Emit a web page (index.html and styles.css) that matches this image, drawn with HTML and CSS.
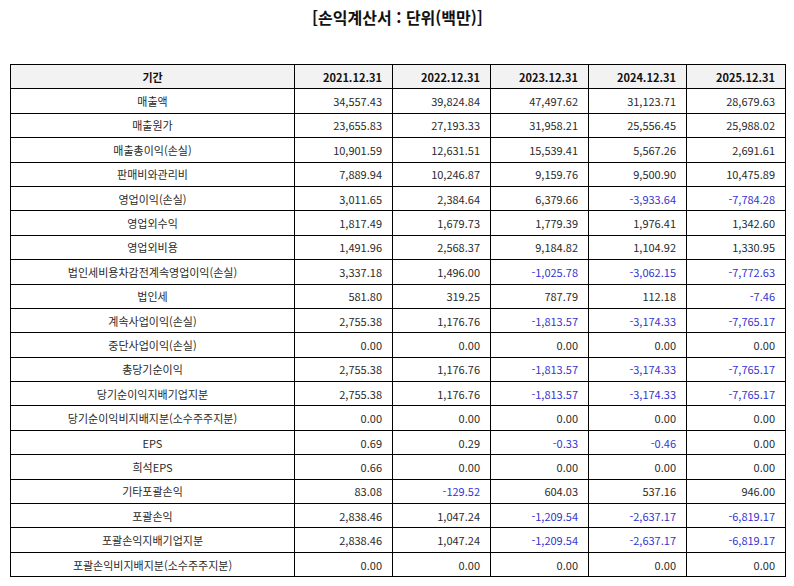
FILE: index.html
```html
<!DOCTYPE html>
<html lang="ko">
<head>
<meta charset="utf-8">
<title>손익계산서</title>
<link rel="stylesheet" href="styles.css">
</head>
<body>
<h1 class="title">[손익계산서 : 단위(백만)]</h1>
<table class="fin">
<colgroup>
<col class="c-label"><col class="c-val"><col class="c-val"><col class="c-val"><col class="c-val"><col class="c-last">
</colgroup>
<thead>
<tr><th>기간</th><th class="num">2021.12.31</th><th class="num">2022.12.31</th><th class="num">2023.12.31</th><th class="num">2024.12.31</th><th class="num">2025.12.31</th></tr>
</thead>
<tbody>
<tr><td>매출액</td><td>34,557.43</td><td>39,824.84</td><td>47,497.62</td><td>31,123.71</td><td>28,679.63</td></tr>
<tr><td>매출원가</td><td>23,655.83</td><td>27,193.33</td><td>31,958.21</td><td>25,556.45</td><td>25,988.02</td></tr>
<tr><td>매출총이익(손실)</td><td>10,901.59</td><td>12,631.51</td><td>15,539.41</td><td>5,567.26</td><td>2,691.61</td></tr>
<tr><td>판매비와관리비</td><td>7,889.94</td><td>10,246.87</td><td>9,159.76</td><td>9,500.90</td><td>10,475.89</td></tr>
<tr><td>영업이익(손실)</td><td>3,011.65</td><td>2,384.64</td><td>6,379.66</td><td class="neg">-3,933.64</td><td class="neg">-7,784.28</td></tr>
<tr><td>영업외수익</td><td>1,817.49</td><td>1,679.73</td><td>1,779.39</td><td>1,976.41</td><td>1,342.60</td></tr>
<tr><td>영업외비용</td><td>1,491.96</td><td>2,568.37</td><td>9,184.82</td><td>1,104.92</td><td>1,330.95</td></tr>
<tr><td>법인세비용차감전계속영업이익(손실)</td><td>3,337.18</td><td>1,496.00</td><td class="neg">-1,025.78</td><td class="neg">-3,062.15</td><td class="neg">-7,772.63</td></tr>
<tr><td>법인세</td><td>581.80</td><td>319.25</td><td>787.79</td><td>112.18</td><td class="neg">-7.46</td></tr>
<tr><td>계속사업이익(손실)</td><td>2,755.38</td><td>1,176.76</td><td class="neg">-1,813.57</td><td class="neg">-3,174.33</td><td class="neg">-7,765.17</td></tr>
<tr><td>중단사업이익(손실)</td><td>0.00</td><td>0.00</td><td>0.00</td><td>0.00</td><td>0.00</td></tr>
<tr><td>총당기순이익</td><td>2,755.38</td><td>1,176.76</td><td class="neg">-1,813.57</td><td class="neg">-3,174.33</td><td class="neg">-7,765.17</td></tr>
<tr><td>당기순이익지배기업지분</td><td>2,755.38</td><td>1,176.76</td><td class="neg">-1,813.57</td><td class="neg">-3,174.33</td><td class="neg">-7,765.17</td></tr>
<tr><td>당기순이익비지배지분(소수주주지분)</td><td>0.00</td><td>0.00</td><td>0.00</td><td>0.00</td><td>0.00</td></tr>
<tr><td>EPS</td><td>0.69</td><td>0.29</td><td class="neg">-0.33</td><td class="neg">-0.46</td><td>0.00</td></tr>
<tr><td>희석EPS</td><td>0.66</td><td>0.00</td><td>0.00</td><td>0.00</td><td>0.00</td></tr>
<tr><td>기타포괄손익</td><td>83.08</td><td class="neg">-129.52</td><td>604.03</td><td>537.16</td><td>946.00</td></tr>
<tr><td>포괄손익</td><td>2,838.46</td><td>1,047.24</td><td class="neg">-1,209.54</td><td class="neg">-2,637.17</td><td class="neg">-6,819.17</td></tr>
<tr><td>포괄손익지배기업지분</td><td>2,838.46</td><td>1,047.24</td><td class="neg">-1,209.54</td><td class="neg">-2,637.17</td><td class="neg">-6,819.17</td></tr>
<tr><td>포괄손익비지배지분(소수주주지분)</td><td>0.00</td><td>0.00</td><td>0.00</td><td>0.00</td><td>0.00</td></tr>
</tbody>
</table>
</body>
</html>
```

FILE: styles.css
```css
html, body {
  margin: 0;
  padding: 0;
  background: #ffffff;
}
body {
  padding: 0 9px 0 10px;
  font-family: "Noto Sans CJK KR", "Noto Sans", sans-serif;
  color: #111111;
}
.title {
  margin: 0;
  height: 64px;
  padding-top: 5px;
  box-sizing: border-box;
  text-align: center;
  font-size: 16px;
  font-weight: 700;
  line-height: 24px;
  color: #111111;
}
.fin {
  width: 775px;
  border-collapse: collapse;
  table-layout: fixed;
  font-size: 11px;
}
.c-label { width: 284px; }
.c-val { width: 98px; }
.c-last { width: 99px; }
.fin th, .fin td {
  border: 1px solid #000000;
  height: 23.4px;
  padding: 0 10px;
  line-height: 14px;
  white-space: nowrap;
}
.fin th {
  background: #f2f2f2;
  font-weight: 700;
  text-align: center;
}
.fin th.num {
  text-align: right;
}
.fin td {
  text-align: right;
  font-weight: 400;
  color: #2a2a2a;
}
.fin td:first-child {
  text-align: center;
}
.fin td.neg {
  color: #3434cf;
}
```
